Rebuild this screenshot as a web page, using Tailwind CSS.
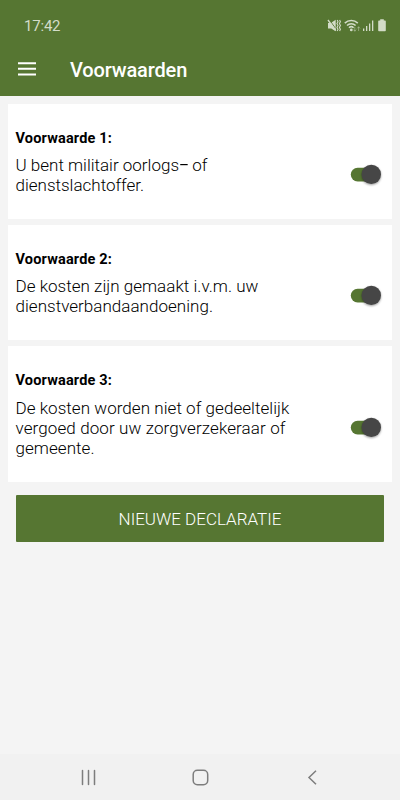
<!DOCTYPE html>
<html lang="nl">
<head>
<meta charset="utf-8">
<meta name="viewport" content="width=device-width, initial-scale=1">
<title>Voorwaarden</title>
<script src="https://cdn.jsdelivr.net/npm/@tailwindcss/browser@4"></script>
</head>
<body class="flex h-[800px] w-[400px] flex-col overflow-hidden bg-[#f4f4f4] font-['Roboto',sans-serif] text-black">
  <header class="h-24 shrink-0 bg-[#567632]">
    <div class="flex h-[50px] items-center pt-[2px] pr-[13px] pl-6 text-[#d3dcc8]">
      <span class="flex-1 text-[15px] leading-5 tracking-[-0.2px]">17:42</span>
      <svg class="h-4 w-[60px]" viewBox="0 0 60 16" fill="currentColor">
        <path d="M1 5h2.800L8.700 1.800v11.400L4.200 10.400H1z"/>
        <path d="M2.200 1.500l6 8.500" stroke="#567632" stroke-width="1"/>
        <path d="M1 2l7.700 10.500" stroke="currentColor" stroke-width="1.300"/>
        <path d="M10.200 2l.8 1.700-1 1.900 1 1.900-1 1.900 1 1.900-.8 1.700M12.600 2l.8 1.700-1 1.900 1 1.900-1 1.900 1 1.900-.8 1.700" fill="none" stroke="currentColor" stroke-width="1.100"/>
        <path d="M17.800 5.100a9.500 9.500 0 0 1 13 0M20 7.500a6.200 6.200 0 0 1 8.600 0M22 9.800a3.300 3.300 0 0 1 4.600 0" fill="none" stroke="currentColor" stroke-width="1.600"/>
        <circle cx="24.300" cy="11.900" r="1.400"/>
        <path d="M27.800 8.800v4.500M26.400 11.600l1.400 1.600 1.400-1.600M31.600 13V8.700M30.200 10.400L31.600 8.800l1.400 1.600" fill="none" stroke="currentColor" stroke-width=".9" opacity=".5"/>
        <path d="M36 10.500h1.300V13H36zM39 8h1.300v5H39zM42 5.500h1.300V13H42zM45 2.500h1.300V13H45z"/>
        <path d="M53.200 1.200h3.600v1.300h1.200q.8 0 .8.800v9.200q0 .8-.8.800h-6q-.8 0-.8-.8V3.300q0-.8.8-.8h1.200z"/>
      </svg>
    </div>
    <div class="flex h-[38px] items-center pl-[18px]">
      <svg class="h-[14px] w-[18px]" viewBox="0 0 18 14" fill="#fff"><path d="M0 .2h18v2H0zM0 5.800h18v2H0zM0 11.500h18v2H0z"/></svg>
      <h1 class="mt-px ml-[34px] text-[20px] leading-6 font-medium tracking-[-0.15px] text-white">Voorwaarden</h1>
    </div>
  </header>

  <main class="flex flex-1 flex-col gap-1.5 px-2 pt-2">
    <section class="flex h-[115px] items-start bg-white pt-[25px] pl-[7.500px]">
      <div class="flex-1">
        <h2 class="text-[14.500px] leading-5 font-bold tracking-[0.180px]">Voorwaarde 1:</h2>
        <p class="mt-1.5 text-[17px] leading-5 font-light">U bent militair oorlogs<span class="-mr-[2px] inline-block origin-left scale-x-90 font-normal">–</span> of<br>dienstslachtoffer.</p>
      </div>
      <svg class="mt-[33px] mr-2 h-6 w-9 overflow-visible" viewBox="0 0 36 24"><rect x="2.800" y="5.700" width="28" height="13.700" rx="6.850" fill="#567632"/><circle cx="23.300" cy="12.400" r="9.700" fill="#464646" class="drop-shadow-[0_1px_1px_rgba(0,0,0,.4)]"/></svg>
    </section>
    <section class="flex h-[115px] items-start bg-white pt-[25px] pl-[7.500px]">
      <div class="flex-1">
        <h2 class="text-[14.500px] leading-5 font-bold tracking-[0.180px]">Voorwaarde 2:</h2>
        <p class="mt-1.5 text-[17px] leading-5 font-light tracking-[0.030px]">De kosten zijn gemaakt i.v.m. uw<br>dienstverbandaandoening.</p>
      </div>
      <svg class="mt-[33px] mr-2 h-6 w-9 overflow-visible" viewBox="0 0 36 24"><rect x="2.800" y="5.700" width="28" height="13.700" rx="6.850" fill="#567632"/><circle cx="23.300" cy="12.400" r="9.700" fill="#464646" class="drop-shadow-[0_1px_1px_rgba(0,0,0,.4)]"/></svg>
    </section>
    <section class="flex h-[136px] items-start bg-white pt-[25px] pl-[7.500px]">
      <div class="flex-1">
        <h2 class="text-[14.500px] leading-5 font-bold tracking-[0.180px]">Voorwaarde 3:</h2>
        <p class="mt-[7px] text-[17px] leading-5 font-light tracking-[0.050px]">De kosten worden niet of gedeeltelijk<br><span class="tracking-[0.110px]">vergoed door uw zorgverzekeraar of</span><br>gemeente.</p>
      </div>
      <svg class="mt-[44px] mr-2 h-6 w-9 overflow-visible" viewBox="0 0 36 24"><rect x="2.800" y="5.700" width="28" height="13.700" rx="6.850" fill="#567632"/><circle cx="23.300" cy="12.400" r="9.700" fill="#464646" class="drop-shadow-[0_1px_1px_rgba(0,0,0,.4)]"/></svg>
    </section>
    <button class="mx-2 mt-[7px] h-[47px] rounded-[1px] bg-[#567632] pt-[3px] text-[17px] font-light text-white">NIEUWE DECLARATIE</button>
  </main>

  <nav class="flex h-[46px] shrink-0 items-center bg-[#f1f1f1]">
    <svg class="h-[46px] w-[400px]" viewBox="0 0 400 46" fill="none" stroke="#7d7d7d" stroke-width="1.500" stroke-linecap="round" stroke-linejoin="round">
      <path d="M82.500 16.500v14M88.500 16.500v14M94.500 16.500v14"/>
      <rect x="193.200" y="16.200" width="14.500" height="14.500" rx="4.200"/>
      <path d="M316 16.700l-7 6.800 7 6.800" stroke-linecap="butt" stroke-linejoin="miter"/>
    </svg>
  </nav>
</body>
</html>
